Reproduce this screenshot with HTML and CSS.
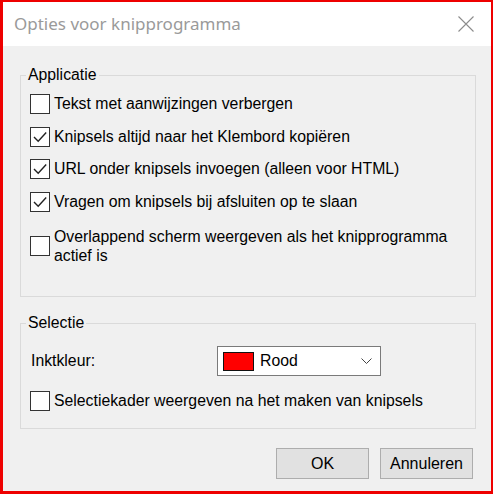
FILE: index.html
```html
<!DOCTYPE html>
<html lang="nl">
<head>
<meta charset="utf-8">
<title>Opties voor knipprogramma</title>
<link rel="stylesheet" href="styles.css">
</head>
<body>
<div class="window">
  <div class="titlebar">
    <span class="title">Opties voor knipprogramma</span>
    <svg class="close" width="16" height="16" viewBox="0 0 16 16"><path d="M0.5 0.5 L15.5 15.5 M15.5 0.5 L0.5 15.5" stroke="#8c8c8c" stroke-width="1.1" fill="none"/></svg>
  </div>
  <div class="content">
    <fieldset class="group group-app">
      <legend>Applicatie</legend>
      <div class="row">
        <span class="cb"></span>
        <span class="label">Tekst met aanwijzingen verbergen</span>
      </div>
      <div class="row">
        <span class="cb"><svg viewBox="0 0 18 18" width="18" height="18"><path d="M3 9 L7.2 13.2 L15.2 4.5" stroke="#222" stroke-width="1.4" fill="none"/></svg></span>
        <span class="label">Knipsels altijd naar het Klembord kopiëren</span>
      </div>
      <div class="row">
        <span class="cb"><svg viewBox="0 0 18 18" width="18" height="18"><path d="M3 9 L7.2 13.2 L15.2 4.5" stroke="#222" stroke-width="1.4" fill="none"/></svg></span>
        <span class="label">URL onder knipsels invoegen (alleen voor HTML)</span>
      </div>
      <div class="row">
        <span class="cb"><svg viewBox="0 0 18 18" width="18" height="18"><path d="M3 9 L7.2 13.2 L15.2 4.5" stroke="#222" stroke-width="1.4" fill="none"/></svg></span>
        <span class="label">Vragen om knipsels bij afsluiten op te slaan</span>
      </div>
      <div class="row row-multi">
        <span class="cb"></span>
        <span class="label">Overlappend scherm weergeven als het knipprogramma actief is</span>
      </div>
    </fieldset>
    <fieldset class="group group-sel">
      <legend>Selectie</legend>
      <div class="ink-row">
        <span class="ink-label">Inktkleur:</span>
        <div class="select">
          <span class="swatch"></span>
          <span class="select-text">Rood</span>
          <svg class="chevron" width="11" height="7" viewBox="0 0 11 7"><path d="M0.5 0.5 L5.5 5.5 L10.5 0.5" stroke="#444" stroke-width="1" fill="none"/></svg>
        </div>
      </div>
      <div class="row">
        <span class="cb"></span>
        <span class="label">Selectiekader weergeven na het maken van knipsels</span>
      </div>
    </fieldset>
    <div class="buttons">
      <button class="btn">OK</button>
      <button class="btn">Annuleren</button>
    </div>
  </div>
</div>
</body>
</html>
```
FILE: styles.css
```css
* { box-sizing: border-box; }
html, body { margin: 0; padding: 0; background: #fff; }
body {
  font-family: "Liberation Sans", Arial, sans-serif;
  font-size: 15.8px;
  color: #000;
}
.window {
  width: 493px;
  height: 494px;
  border: 2px solid #ee0000;
  border-left-width: 3px;
  border-bottom-width: 3px;
  background: #f0f0f0;
  display: flex;
  flex-direction: column;
}
.titlebar {
  height: 44px;
  background: #fff;
  display: flex;
  align-items: center;
  justify-content: space-between;
  padding: 0 17px 0 11px;
}
.title {
  font-family: "Noto Sans", "Open Sans", sans-serif;
  font-size: 17px;
  color: #9a9a9a;
  position: relative;
  top: -1px;
}
.close { display: block; margin-top: -1px; }
.content {
  flex: 1;
  display: flex;
  flex-direction: column;
  padding: 0 15px 0 17px;
}
.group {
  margin: 0;
  border: 1px solid #dadada;
  padding: 0 9px;
  min-width: 0;
}
.group legend {
  padding: 0 2px;
  margin-left: -4px;
  line-height: 16px;
  height: 16px;
}
.group-app {
  margin-top: 21px;
  height: 230px;
  padding-top: 11px;
  display: flex;
  flex-direction: column;
  gap: 12.7px;
}
.group-sel {
  margin-top: 18px;
  height: 114px;
  padding-top: 15px;
}
.row {
  display: flex;
  align-items: center;
  gap: 4px;
  line-height: 20px;
}
.row-multi {
  margin-top: 2px;
  line-height: 19.5px;
}
.cb {
  flex: none;
  width: 20px;
  height: 20px;
  border: 1px solid #333;
  background: #fff;
  display: flex;
  align-items: center;
  justify-content: center;
}
.cb svg { display: block; }
.label { white-space: normal; }
.row-multi .label { width: 410px; }
.ink-row {
  display: flex;
  align-items: center;
  height: 30px;
  margin-bottom: 15px;
}
.ink-label {
  width: 187px;
  padding-left: 1px;
}
.select {
  width: 164px;
  height: 30px;
  border: 1px solid #7a7a7a;
  background: #fff;
  display: flex;
  align-items: center;
  padding-left: 5px;
}
.swatch {
  width: 31px;
  height: 19px;
  border: 1px solid #111;
  background: #f00;
  margin-right: 6px;
}
.select-text { flex: 1; }
.chevron { margin-right: 8px; }
.buttons {
  display: flex;
  justify-content: flex-end;
  gap: 11px;
  margin-top: 19px;
  padding-right: 3px;
}
.btn {
  width: 93px;
  height: 31px;
  background: #e1e1e1;
  border: 1px solid #adadad;
  font-family: "Liberation Sans", Arial, sans-serif;
  font-size: 16px;
  color: #000;
  padding: 0;
}
```
